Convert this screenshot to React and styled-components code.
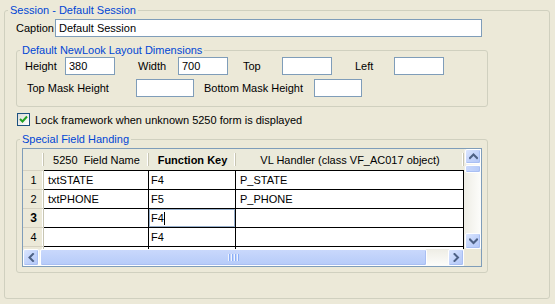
import React from 'react'
import styled, { createGlobalStyle } from 'styled-components'

const GlobalStyle = createGlobalStyle`
html, body {
    margin: 0;
    padding: 0;
    background: #ece9d8;
}
body {
    font-family: "Liberation Sans", Arial, sans-serif;
    font-size: 11px;
    color: #000;
}
`

const Page = styled.div`
width: 555px;
height: 304px;
box-sizing: border-box;
padding: 3px 0 0 4px;
`

const GroupBox = styled.fieldset`
box-sizing: border-box;
width: ${p => p.$width}px;
height: ${p => p.$height}px;
margin: ${p => p.$margin || '0'};
padding: 0;
min-width: 0;
border: 1px solid #d0d0bf;
border-radius: 3px;
`

const Legend = styled.legend`
color: #0046d5;
line-height: 14px;
padding: 0 2px;
margin-left: 3px;
`

const Row = styled.div`
display: flex;
align-items: center;
margin: ${p => p.$margin || '0'};
`

const Label = styled.span`
flex: none;
width: ${p => p.$width}px;
margin-left: ${p => p.$offset || 0}px;
white-space: nowrap;
`

const TextBox = styled.div`
flex: none;
box-sizing: border-box;
width: ${p => p.$width}px;
height: 18px;
border: 1px solid #7f9db9;
background: #fff;
padding: 0 3px;
line-height: 16px;
`

const CheckBox = styled.div`
flex: none;
box-sizing: border-box;
width: 13px;
height: 13px;
margin: 0 5px 0 12px;
border: 1px solid #1c5180;
background: linear-gradient(135deg, #dcdcd7, #fff);
display: flex;
align-items: center;
justify-content: center;
`

const Grid = styled.div`
box-sizing: border-box;
width: 460px;
margin: 2px 0 0 5px;
border: 1px solid #7f9db9;
display: grid;
grid-template-columns: 441px 17px;
grid-template-rows: 100px 17px;
background: #fff;
`

const Sheet = styled.div`
overflow: hidden;
display: grid;
grid-template-columns: 21px 105px 87px 228px;
grid-template-rows: 22px;
grid-auto-rows: 19px;
`

const HeadCell = styled.div`
position: relative;
box-sizing: border-box;
background: #ebeadb;
border-bottom: 1px solid ${p => p.$corner ? '#d6d2c2' : '#000'};
display: flex;
align-items: center;
justify-content: center;
font-weight: ${p => p.$bold ? 700 : 400};
white-space: nowrap;
overflow: hidden;

&::after {
    content: '';
    position: absolute;
    right: 0;
    top: 4px;
    bottom: 4px;
    width: 1px;
    background: #c7c5b2;
    box-shadow: -1px 0 0 #fff;
}
`

const RowHead = styled.div`
box-sizing: border-box;
background: #ece9d8;
border-bottom: 1px solid #d6d2c2;
box-shadow: inset -1px 0 0 #c7c5b2, inset -2px 0 0 #fff;
display: flex;
align-items: center;
justify-content: center;
font-weight: ${p => p.$current ? 700 : 400};
font-size: ${p => p.$current ? 12 : 11}px;
`

const Cell = styled.div`
box-sizing: border-box;
border-right: 1px solid #000;
border-bottom: 1px solid #000;
padding-left: ${p => p.$pad ?? 4}px;
display: flex;
align-items: center;
white-space: nowrap;
overflow: hidden;
box-shadow: ${p => p.$selected ? 'inset 0 0 0 1px #98b0cc' : 'none'};
`

const Caret = styled.span`
display: inline-block;
width: 1px;
height: 13px;
background: #000;
`

const VScroll = styled.div`
display: flex;
flex-direction: column;
background: linear-gradient(to right, #eeede5, #fdfdfb);
`

const HScroll = styled.div`
display: flex;
background: linear-gradient(to bottom, #eeede5, #fdfdfb);
`

const ScrollButton = styled.div`
flex: none;
box-sizing: border-box;
width: ${p => p.$w}px;
height: ${p => p.$h}px;
margin: ${p => p.$margin || '0'};
border: 1px solid #fff;
border-radius: 2px;
background: linear-gradient(135deg, #dbe6fe 0%, #c3d4fb 50%, #b3c7f7 100%);
box-shadow: inset -1px -1px 0 #a9bff3;
display: flex;
align-items: center;
justify-content: center;
`

const Thumb = styled.div`
flex: none;
box-sizing: border-box;
width: ${p => p.$w}px;
height: ${p => p.$h}px;
margin: ${p => p.$margin || '0'};
border: 1px solid #fff;
border-radius: 2px;
background: ${p => p.$vertical
        ? 'linear-gradient(to right, #c9d8fc, #b6cbf9)'
        : 'linear-gradient(to bottom, #c9d8fc, #b6cbf9)'};
box-shadow: inset -1px -1px 0 #a9bff3;
display: flex;
align-items: center;
justify-content: center;
gap: 1px;
`

const Grip = styled.span`
width: 1px;
height: 7px;
background: #eef3fe;
box-shadow: 1px 0 0 #8cb0f8;
margin-right: 1px;
`

const Track = styled.div`
flex: 1;
`

const Corner = styled.div`
background: #ece9d8;
`

const Arrow = ({ dir }) => {
    const paths = {
        up: 'M1 5 L4.5 1.5 L8 5',
        down: 'M1 1.5 L4.5 5 L8 1.5',
        left: 'M5 1 L1.5 4.5 L5 8',
        right: 'M1.5 1 L5 4.5 L1.5 8',
    }
    const vertical = dir === 'up' || dir === 'down'
    return (
        <svg width={vertical ? 9 : 7} height={vertical ? 7 : 9} viewBox={vertical ? '0 0 9 7' : '0 0 7 9'}>
            <path d={paths[dir]} fill="none" stroke="#4d6185" strokeWidth="2" strokeLinecap="square" />
        </svg>
    )
}

// row 5 is only partly visible under the header, so its number is not shown
const rows = [
    { id: 1, n: '1', name: 'txtSTATE', key: 'F4', handler: 'P_STATE' },
    { id: 2, n: '2', name: 'txtPHONE', key: 'F5', handler: 'P_PHONE' },
    { id: 3, n: '3', name: '', key: 'F4', handler: '', current: true },
    { id: 4, n: '4', name: '', key: 'F4', handler: '' },
    { id: 5, n: '', name: '', key: '', handler: '' },
]

const App = () => (
    <Page>
        <GlobalStyle />
        <GroupBox $width={546} $height={296}>
            <Legend>Session - Default Session</Legend>
            <Row $margin="2px 0 0 0">
                <Label $offset={11} $width={39}>Caption</Label>
                <TextBox $width={427}>Default Session</TextBox>
            </Row>

            <GroupBox $width={472} $height={64} $margin="6px 0 0 11px">
                <Legend>Default NewLook Layout Dimensions</Legend>
                <Row>
                    <Label $offset={8} $width={40}>Height</Label>
                    <TextBox $width={50}>380</TextBox>
                    <Label $offset={23} $width={40}>Width</Label>
                    <TextBox $width={50}>700</TextBox>
                    <Label $offset={15} $width={39}>Top</Label>
                    <TextBox $width={50} />
                    <Label $offset={23} $width={39}>Left</Label>
                    <TextBox $width={50} />
                </Row>
                <Row $margin="4px 0 0 0">
                    <Label $offset={10} $width={109}>Top Mask Height</Label>
                    <TextBox $width={58} />
                    <Label $offset={10} $width={110}>Bottom Mask Height</Label>
                    <TextBox $width={48} />
                </Row>
            </GroupBox>

            <Row $margin="6px 0 0 0">
                <CheckBox>
                    <svg width="9" height="9" viewBox="0 0 9 9">
                        <path d="M1 4 L3.5 6.5 L8 1.5" fill="none" stroke="#21a121" strokeWidth="2" />
                    </svg>
                </CheckBox>
                <span>Lock framework when unknown 5250 form is displayed</span>
            </Row>

            <GroupBox $width={472} $height={141} $margin="6px 0 0 11px">
                <Legend>Special Field Handing</Legend>
                <Grid>
                    <Sheet>
                        <HeadCell $corner />
                        <HeadCell>5250&nbsp; Field Name</HeadCell>
                        <HeadCell $bold>Function Key</HeadCell>
                        <HeadCell>VL Handler (class VF_AC017 object)</HeadCell>
                        {rows.map(r => (
                            <React.Fragment key={r.id}>
                                <RowHead $current={r.current}>{r.n}</RowHead>
                                <Cell>{r.name}</Cell>
                                <Cell $pad={2} $selected={r.current}>
                                    {r.key}{r.current && <Caret />}
                                </Cell>
                                <Cell>{r.handler}</Cell>
                            </React.Fragment>
                        ))}
                    </Sheet>
                    <VScroll>
                        <ScrollButton $w={16} $h={15} $margin="0 0 0 1px"><Arrow dir="up" /></ScrollButton>
                        <Thumb $vertical $w={16} $h={8} $margin="1px 0 0 1px" />
                        <Track />
                        <ScrollButton $w={16} $h={16} $margin="0 0 0 1px"><Arrow dir="down" /></ScrollButton>
                    </VScroll>
                    <HScroll>
                        <ScrollButton $w={16} $h={17}><Arrow dir="left" /></ScrollButton>
                        <Thumb $w={387} $h={17} $margin="0 0 0 1px">
                            <Grip /><Grip /><Grip /><Grip />
                        </Thumb>
                        <Track />
                        <ScrollButton $w={16} $h={17}><Arrow dir="right" /></ScrollButton>
                    </HScroll>
                    <Corner />
                </Grid>
            </GroupBox>
        </GroupBox>
    </Page>
)

export default App
